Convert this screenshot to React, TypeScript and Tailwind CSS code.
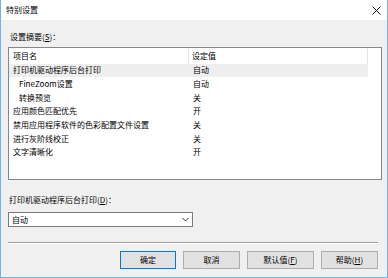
import React from 'react';

const rows: {name: string; value: string; indent?: boolean; active?: boolean}[] = [
  {name: '打印机驱动程序后台打印', value: '自动', active: true},
  {name: 'FineZoom设置', value: '自动', indent: true},
  {name: '转换预览', value: '关', indent: true},
  {name: '应用颜色匹配优先', value: '开'},
  {name: '禁用应用程序软件的色彩配置文件设置', value: '关'},
  {name: '进行灰阶线校正', value: '关'},
  {name: '文字清晰化', value: '开'},
];

const Btn = ({children, primary}: {children: React.ReactNode; primary?: boolean}) => (
  <button
    className={`h-[18px] flex items-center justify-center bg-[#e1e1e1] border text-[8px] leading-none text-black ${
      primary ? 'border-[#0078d7] w-[56px]' : 'border-[#adadad] w-[57px]'
    }`}
  >
    {children}
  </button>
);

const App = () => {
  return (
    <div
      className="w-[388px] h-[278px] flex flex-col border-l border-r border-b border-[#6fb3ea] bg-white text-black"
      style={{fontFamily: '"Noto Sans CJK SC", "Noto Sans", sans-serif'}}
    >
      {/* title bar */}
      <div className="h-[20px] flex items-center justify-between pl-[5px] pr-[5px] bg-white">
        <span className="text-[8px] leading-none">特别设置</span>
        <svg width="9" height="9" viewBox="0 0 9 9" className="mr-[1px]">
          <path d="M0.5 0.5L8.5 8.5M8.5 0.5L0.5 8.5" stroke="#111" strokeWidth="1" />
        </svg>
      </div>

      {/* body */}
      <div className="flex-1 bg-[#f0f0f0] flex flex-col pl-[7px] pr-[5px]">
        <div className="text-[8px] leading-[11px] mt-[11px] ml-[2px]">
          设置摘要(<span className="underline">S</span>)：
        </div>

        {/* list */}
        <div className="mt-[5px] h-[133px] bg-white border border-[#828790] flex flex-col">
          <div className="h-[15.5px] flex items-center text-[8px]">
            <div className="w-[180px] h-full flex items-center pl-[4px] border-r border-[#e5e5e5]">项目名</div>
            <div className="w-[179px] h-full flex items-center pl-[3px] border-r border-[#e5e5e5]">设定值</div>
          </div>
          {rows.map((r) => (
            <div
              key={r.name}
              className={`h-[13.7px] w-[359px] flex items-center text-[8px] ${r.active ? 'bg-[#eeeeee]' : ''}`}
            >
              <div className={`w-[180px] ${r.indent ? 'pl-[10px]' : 'pl-[4px]'}`}>{r.name}</div>
              <div className="pl-[4px]">{r.value}</div>
            </div>
          ))}
        </div>

        <div className="text-[8px] leading-[11px] mt-[14px] ml-[1px]">
          打印机驱动程序后台打印(<span className="underline">D</span>)：
        </div>

        {/* select */}
        <div className="mt-[7px] w-[185px] h-[15px] bg-white border border-[#7a7a7a] flex items-center justify-between pl-[3px] pr-[3px] text-[8px]">
          <span>自动</span>
          <svg width="7" height="5" viewBox="0 0 7 5">
            <path d="M0.5 1L3.5 4L6.5 1" stroke="#333" strokeWidth="1" fill="none" />
          </svg>
        </div>

        {/* separator */}
        <div className="mt-[15px] mr-[4px] h-[2px] border-t border-[#a0a0a0] border-b border-b-white" />

        {/* buttons */}
        <div className="mt-[7px] flex justify-end gap-[7px] pr-[4px]">
          <Btn primary>确定</Btn>
          <Btn>取消</Btn>
          <div className="w-[67px] flex">
            <button className="h-[18px] w-full flex items-center justify-center bg-[#e1e1e1] border border-[#adadad] text-[8px] leading-none">
              默认值(<span className="underline">F</span>)
            </button>
          </div>
          <Btn>
            帮助(<span className="underline">H</span>)
          </Btn>
        </div>
      </div>
    </div>
  );
};

export default App;
